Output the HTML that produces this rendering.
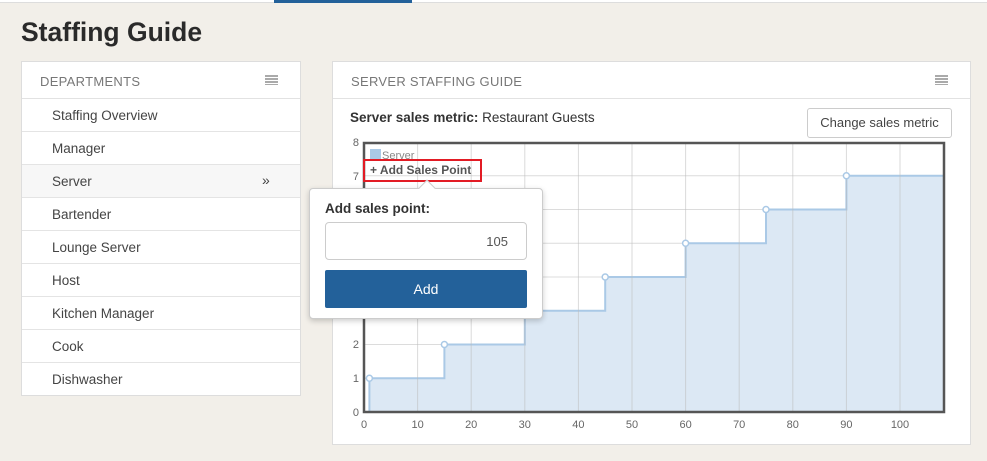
<!DOCTYPE html>
<html><head><style>
*{margin:0;padding:0;box-sizing:border-box}
body{width:987px;height:461px;background:#f2efe9;font-family:"Liberation Sans",sans-serif;color:#333;position:relative;overflow:hidden}
.abs{position:absolute}
.panel{position:absolute;background:#fff;border:1px solid #ddd}
.hdr{height:37px;border-bottom:1px solid #e2e2e2;font-size:13px;color:#777;padding:12px 18px;letter-spacing:.3px}
.row{height:33px;border-bottom:1px solid #e4e4e4;font-size:13.5px;color:#444;padding:9px 30px;position:relative}
.ico{position:absolute;width:13px;height:10px;background:repeating-linear-gradient(#aaa 0 2px,#fff 2px 3px)}
</style></head><body>
<div class="abs" style="left:0;top:0;width:987px;height:3px;border-bottom:1px solid #ddd;background:#fff"></div>
<div class="abs" style="left:274px;top:0;width:138px;height:3px;background:#23619a"></div>
<div class="abs" style="left:21px;top:17px;font-size:26.5px;font-weight:bold;color:#2a2a2a">Staffing Guide</div>

<div class="panel" style="left:21px;top:61px;width:280px;height:335px">
<div class="hdr">DEPARTMENTS<span class="ico" style="left:243px;top:13px"></span></div>
<div class="row">Staffing Overview</div>
<div class="row">Manager</div>
<div class="row" style="background:#f7f7f7">Server<span style="position:absolute;left:240px;top:7px;font-size:14px">»</span></div>
<div class="row">Bartender</div>
<div class="row">Lounge Server</div>
<div class="row">Host</div>
<div class="row">Kitchen Manager</div>
<div class="row">Cook</div>
<div class="row" style="border-bottom:none">Dishwasher</div>
</div>

<div class="panel" style="left:332px;top:61px;width:639px;height:384px">
<div class="hdr">SERVER STAFFING GUIDE<span class="ico" style="left:602px;top:13px"></span></div>
</div>
<div class="abs" style="left:350px;top:110px;font-size:13.5px;color:#333"><b>Server sales metric:</b> Restaurant Guests</div>
<div class="abs" style="left:807px;top:108px;width:145px;height:30px;border:1px solid #ccc;border-radius:3px;background:#fff;font-size:13px;color:#444;text-align:center;line-height:28px">Change sales metric</div>

<svg class="abs" style="left:0;top:0" width="987" height="461">
<g stroke="#dcdcdc" stroke-width="1">
<line x1="363" x2="944" y1="378.25" y2="378.25"/><line x1="363" x2="944" y1="344.5" y2="344.5"/><line x1="363" x2="944" y1="310.75" y2="310.75"/><line x1="363" x2="944" y1="277" y2="277"/><line x1="363" x2="944" y1="243.25" y2="243.25"/><line x1="363" x2="944" y1="209.5" y2="209.5"/><line x1="363" x2="944" y1="175.75" y2="175.75"/>
</g>
<path d="M369.4 412 V378.25 H444.4 V344.5 H524.8 V310.75 H605.2 V277 H685.6 V243.25 H766 V209.5 H846.4 V175.75 H944 V412 Z" fill="#dce8f4" stroke="#aac9e6" stroke-width="2"/>
<g stroke="#bbb" stroke-opacity=".55" stroke-width="1">
<line x1="417.6" x2="417.6" y1="142" y2="412"/><line x1="471.2" x2="471.2" y1="142" y2="412"/><line x1="524.8" x2="524.8" y1="142" y2="412"/><line x1="578.4" x2="578.4" y1="142" y2="412"/><line x1="632" x2="632" y1="142" y2="412"/><line x1="685.6" x2="685.6" y1="142" y2="412"/><line x1="739.2" x2="739.2" y1="142" y2="412"/><line x1="792.8" x2="792.8" y1="142" y2="412"/><line x1="846.4" x2="846.4" y1="142" y2="412"/><line x1="900" x2="900" y1="142" y2="412"/>
</g>
<g fill="#fff" stroke="#aac9e6" stroke-width="1.5">
<circle cx="369.4" cy="378.25" r="3"/><circle cx="444.4" cy="344.5" r="3"/><circle cx="524.8" cy="310.75" r="3"/><circle cx="605.2" cy="277" r="3"/><circle cx="685.6" cy="243.25" r="3"/><circle cx="766" cy="209.5" r="3"/><circle cx="846.4" cy="175.75" r="3"/>
</g>
<rect x="364" y="143" width="580" height="269" fill="none" stroke="#555" stroke-width="2.5"/>
<g font-family="Liberation Sans" font-size="11" fill="#666" text-anchor="middle">
<text x="364" y="428">0</text><text x="417.6" y="428">10</text><text x="471.2" y="428">20</text><text x="524.8" y="428">30</text><text x="578.4" y="428">40</text><text x="632" y="428">50</text><text x="685.6" y="428">60</text><text x="739.2" y="428">70</text><text x="792.8" y="428">80</text><text x="846.4" y="428">90</text><text x="900" y="428">100</text>
<g text-anchor="end"><text x="359" y="416">0</text><text x="359" y="382">1</text><text x="359" y="348">2</text><text x="359" y="180">7</text><text x="359" y="146">8</text></g>
</g>
<rect x="370" y="149" width="11" height="11" fill="#aac9e6"/>
<text x="382" y="159" font-family="Liberation Sans" font-size="11" fill="#888">Server</text>
</svg>

<div class="abs" style="left:363px;top:159px;width:119px;height:23px;border:2px solid #e21b24;font-size:12px;font-weight:bold;color:#555;padding:2px 5px;white-space:nowrap">+ Add Sales Point</div>

<div class="abs" style="left:309px;top:188px;width:234px;height:131px;background:#fff;border:1px solid #ccc;border-radius:4px;box-shadow:0 2px 6px rgba(0,0,0,.2)"></div>
<div class="abs" style="left:421px;top:182px;width:12px;height:12px;background:#fff;border-left:1px solid #ccc;border-top:1px solid #ccc;transform:rotate(45deg)"></div>
<div class="abs" style="left:325px;top:201px;font-size:13.5px;font-weight:bold;color:#333">Add sales point:</div>
<div class="abs" style="left:325px;top:222px;width:202px;height:38px;border:1px solid #ccc;border-radius:4px;font-size:13px;color:#555;text-align:right;padding:11px 18px 0 0">105</div>
<div class="abs" style="left:325px;top:270px;width:202px;height:38px;background:#23619a;border-radius:2px;color:#fff;font-size:14px;text-align:center;line-height:38px">Add</div>
</body></html>
